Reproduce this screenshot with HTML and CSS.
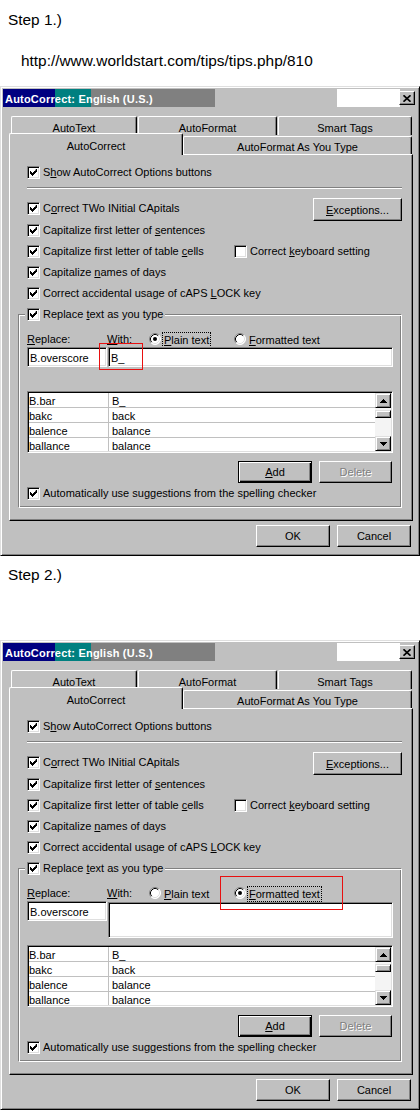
FILE: index.html
```html
<!DOCTYPE html>
<html>
<head>
<meta charset="utf-8">
<link rel="stylesheet" href="styles.css">
</head>
<body>
<p class="step">Step 1.)</p>
<p class="url">http://www.worldstart.com/tips/tips.php/810</p>

<div class="dialog d1">
  <div class="titlebar">
    <span class="title">AutoCorrect: English (U.S.)</span>
    <span class="close"><svg width="8" height="7" viewBox="0 0 8 7"><path d="M0.5 0.3 L7.5 6.7 M7.5 0.3 L0.5 6.7" stroke="#000" stroke-width="1.7" fill="none"/></svg></span>
  </div>
  <div class="tabrow back">
    <div class="tab t1">AutoText</div>
    <div class="tab t2">AutoFormat</div>
    <div class="tab t3">Smart Tags</div>
  </div>
  <div class="tabrow front">
    <div class="tab sel">AutoCorrect</div>
    <div class="tab t5">AutoFormat As You Type</div>
  </div>
  <div class="panel">
    <div class="cb row-show"><span class="chk"><svg width="7" height="7" viewBox="0 0 7 7"><path d="M6 0h1v3h-1v1h-1v1h-1v1h-1v1h-1v-1h-1v-1h-1v-3h1v1h1v1h1v-1h1v-1h1z"/></svg></span><span>S<u>h</u>ow AutoCorrect Options buttons</span></div>
    <div class="sep"></div>
    <div class="cb r1"><span class="chk"><svg width="7" height="7" viewBox="0 0 7 7"><path d="M6 0h1v3h-1v1h-1v1h-1v1h-1v1h-1v-1h-1v-1h-1v-3h1v1h1v1h1v-1h1v-1h1z"/></svg></span><span>C<u>o</u>rrect TWo INitial CApitals</span><span class="btn exc"><u>E</u>xceptions...</span></div>
    <div class="cb r2"><span class="chk"><svg width="7" height="7" viewBox="0 0 7 7"><path d="M6 0h1v3h-1v1h-1v1h-1v1h-1v1h-1v-1h-1v-1h-1v-3h1v1h1v1h1v-1h1v-1h1z"/></svg></span><span>Capitalize first letter of <u>s</u>entences</span></div>
    <div class="cb r3"><span class="cbcol"><span class="chk"><svg width="7" height="7" viewBox="0 0 7 7"><path d="M6 0h1v3h-1v1h-1v1h-1v1h-1v1h-1v-1h-1v-1h-1v-3h1v1h1v1h1v-1h1v-1h1z"/></svg></span><span>Capitalize first letter of table <u>c</u>ells</span></span><span class="chk"></span><span>Correct <u>k</u>eyboard setting</span></div>
    <div class="cb r4"><span class="chk"><svg width="7" height="7" viewBox="0 0 7 7"><path d="M6 0h1v3h-1v1h-1v1h-1v1h-1v1h-1v-1h-1v-1h-1v-3h1v1h1v1h1v-1h1v-1h1z"/></svg></span><span>Capitalize <u>n</u>ames of days</span></div>
    <div class="cb r5"><span class="chk"><svg width="7" height="7" viewBox="0 0 7 7"><path d="M6 0h1v3h-1v1h-1v1h-1v1h-1v1h-1v-1h-1v-1h-1v-3h1v1h1v1h1v-1h1v-1h1z"/></svg></span><span>Correct accidental usage of cAPS <u>L</u>OCK key</span></div>
    <div class="group">
      <div class="cb legend"><span class="chk"><svg width="7" height="7" viewBox="0 0 7 7"><path d="M6 0h1v3h-1v1h-1v1h-1v1h-1v1h-1v-1h-1v-1h-1v-3h1v1h1v1h1v-1h1v-1h1z"/></svg></span><span>Replace <u>t</u>ext as you type</span></div>
      <div class="labels">
        <span class="lbl-replace"><u>R</u>eplace:</span>
        <span class="lbl-with"><u>W</u>ith:</span>
        <span class="opt opt-plain"><svg class="radio" width="12" height="12" viewBox="0 0 12 12"><circle cx="6" cy="6" r="5.5" fill="#fff"/><path d="M2.11 9.89 A5.5 5.5 0 0 1 9.89 2.11" stroke="#808080" fill="none"/><path d="M2.82 9.18 A4.5 4.5 0 0 1 9.18 2.82" stroke="#000" fill="none"/><path d="M9.89 2.11 A5.5 5.5 0 0 1 2.11 9.89" stroke="#fff" fill="none"/><path d="M9.18 2.82 A4.5 4.5 0 0 1 2.82 9.18" stroke="#dfdfdf" fill="none"/><circle cx="6" cy="6" r="2" fill="#000"/></svg><span class="focus"><u>P</u>lain text</span></span>
        <span class="opt"><svg class="radio" width="12" height="12" viewBox="0 0 12 12"><circle cx="6" cy="6" r="5.5" fill="#fff"/><path d="M2.11 9.89 A5.5 5.5 0 0 1 9.89 2.11" stroke="#808080" fill="none"/><path d="M2.82 9.18 A4.5 4.5 0 0 1 9.18 2.82" stroke="#000" fill="none"/><path d="M9.89 2.11 A5.5 5.5 0 0 1 2.11 9.89" stroke="#fff" fill="none"/><path d="M9.18 2.82 A4.5 4.5 0 0 1 2.82 9.18" stroke="#dfdfdf" fill="none"/></svg><span class="nofocus"><u>F</u>ormatted text</span></span>
      </div>
      <div class="inputs">
        <span class="input in-replace">B.overscore</span>
        <span class="input in-with">B_</span>
      </div>
      <div class="list">
        <div class="rows">
          <div class="lrow"><span class="c1">B.bar</span><span class="c2">B_</span></div>
          <div class="lrow"><span class="c1">bakc</span><span class="c2">back</span></div>
          <div class="lrow"><span class="c1">balence</span><span class="c2">balance</span></div>
          <div class="lrow"><span class="c1">ballance</span><span class="c2">balance</span></div>
        </div>
        <div class="scroll">
          <span class="sbtn"><svg width="7" height="4" viewBox="0 0 7 4"><path d="M3 0h1v1h1v1h1v1h1v1H0V3h1V2h1V1h1z"/></svg></span>
          <span class="thumb"></span>
          <span class="sbtn down"><svg width="7" height="4" viewBox="0 0 7 4"><path d="M0 0h7v1h-1v1h-1v1h-1v1h-1v-1h-1v-1h-1v-1h-1z"/></svg></span>
        </div>
      </div>
      <div class="btnrow">
        <span class="btn def add"><u>A</u>dd</span>
        <span class="btn del">Delete</span>
      </div>
      <div class="cb auto"><span class="chk"><svg width="7" height="7" viewBox="0 0 7 7"><path d="M6 0h1v3h-1v1h-1v1h-1v1h-1v1h-1v-1h-1v-1h-1v-3h1v1h1v1h1v-1h1v-1h1z"/></svg></span><span>Automatically use sug<u>g</u>estions from the spelling checker</span></div>
    </div>
  </div>
  <div class="footer">
    <span class="btn fbtn">OK</span>
    <span class="btn fbtn">Cancel</span>
  </div>
  <div class="redbox rb1"></div>
</div>

<p class="step step2">Step 2.)</p>

<div class="dialog d2">
  <div class="titlebar">
    <span class="title">AutoCorrect: English (U.S.)</span>
    <span class="close"><svg width="8" height="7" viewBox="0 0 8 7"><path d="M0.5 0.3 L7.5 6.7 M7.5 0.3 L0.5 6.7" stroke="#000" stroke-width="1.7" fill="none"/></svg></span>
  </div>
  <div class="tabrow back">
    <div class="tab t1">AutoText</div>
    <div class="tab t2">AutoFormat</div>
    <div class="tab t3">Smart Tags</div>
  </div>
  <div class="tabrow front">
    <div class="tab sel">AutoCorrect</div>
    <div class="tab t5">AutoFormat As You Type</div>
  </div>
  <div class="panel">
    <div class="cb row-show"><span class="chk"><svg width="7" height="7" viewBox="0 0 7 7"><path d="M6 0h1v3h-1v1h-1v1h-1v1h-1v1h-1v-1h-1v-1h-1v-3h1v1h1v1h1v-1h1v-1h1z"/></svg></span><span>S<u>h</u>ow AutoCorrect Options buttons</span></div>
    <div class="sep"></div>
    <div class="cb r1"><span class="chk"><svg width="7" height="7" viewBox="0 0 7 7"><path d="M6 0h1v3h-1v1h-1v1h-1v1h-1v1h-1v-1h-1v-1h-1v-3h1v1h1v1h1v-1h1v-1h1z"/></svg></span><span>C<u>o</u>rrect TWo INitial CApitals</span><span class="btn exc"><u>E</u>xceptions...</span></div>
    <div class="cb r2"><span class="chk"><svg width="7" height="7" viewBox="0 0 7 7"><path d="M6 0h1v3h-1v1h-1v1h-1v1h-1v1h-1v-1h-1v-1h-1v-3h1v1h1v1h1v-1h1v-1h1z"/></svg></span><span>Capitalize first letter of <u>s</u>entences</span></div>
    <div class="cb r3"><span class="cbcol"><span class="chk"><svg width="7" height="7" viewBox="0 0 7 7"><path d="M6 0h1v3h-1v1h-1v1h-1v1h-1v1h-1v-1h-1v-1h-1v-3h1v1h1v1h1v-1h1v-1h1z"/></svg></span><span>Capitalize first letter of table <u>c</u>ells</span></span><span class="chk"></span><span>Correct <u>k</u>eyboard setting</span></div>
    <div class="cb r4"><span class="chk"><svg width="7" height="7" viewBox="0 0 7 7"><path d="M6 0h1v3h-1v1h-1v1h-1v1h-1v1h-1v-1h-1v-1h-1v-3h1v1h1v1h1v-1h1v-1h1z"/></svg></span><span>Capitalize <u>n</u>ames of days</span></div>
    <div class="cb r5"><span class="chk"><svg width="7" height="7" viewBox="0 0 7 7"><path d="M6 0h1v3h-1v1h-1v1h-1v1h-1v1h-1v-1h-1v-1h-1v-3h1v1h1v1h1v-1h1v-1h1z"/></svg></span><span>Correct accidental usage of cAPS <u>L</u>OCK key</span></div>
    <div class="group">
      <div class="cb legend"><span class="chk"><svg width="7" height="7" viewBox="0 0 7 7"><path d="M6 0h1v3h-1v1h-1v1h-1v1h-1v1h-1v-1h-1v-1h-1v-3h1v1h1v1h1v-1h1v-1h1z"/></svg></span><span>Replace <u>t</u>ext as you type</span></div>
      <div class="labels">
        <span class="lbl-replace"><u>R</u>eplace:</span>
        <span class="lbl-with"><u>W</u>ith:</span>
        <span class="opt opt-plain"><svg class="radio" width="12" height="12" viewBox="0 0 12 12"><circle cx="6" cy="6" r="5.5" fill="#fff"/><path d="M2.11 9.89 A5.5 5.5 0 0 1 9.89 2.11" stroke="#808080" fill="none"/><path d="M2.82 9.18 A4.5 4.5 0 0 1 9.18 2.82" stroke="#000" fill="none"/><path d="M9.89 2.11 A5.5 5.5 0 0 1 2.11 9.89" stroke="#fff" fill="none"/><path d="M9.18 2.82 A4.5 4.5 0 0 1 2.82 9.18" stroke="#dfdfdf" fill="none"/></svg><span class="nofocus"><u>P</u>lain text</span></span>
        <span class="opt"><svg class="radio" width="12" height="12" viewBox="0 0 12 12"><circle cx="6" cy="6" r="5.5" fill="#fff"/><path d="M2.11 9.89 A5.5 5.5 0 0 1 9.89 2.11" stroke="#808080" fill="none"/><path d="M2.82 9.18 A4.5 4.5 0 0 1 9.18 2.82" stroke="#000" fill="none"/><path d="M9.89 2.11 A5.5 5.5 0 0 1 2.11 9.89" stroke="#fff" fill="none"/><path d="M9.18 2.82 A4.5 4.5 0 0 1 2.82 9.18" stroke="#dfdfdf" fill="none"/><circle cx="6" cy="6" r="2" fill="#000"/></svg><span class="focus"><u>F</u>ormatted text</span></span>
      </div>
      <div class="inputs">
        <span class="input in-replace">B.overscore</span>
        <span class="input in-with tall"></span>
      </div>
      <div class="list">
        <div class="rows">
          <div class="lrow"><span class="c1">B.bar</span><span class="c2">B_</span></div>
          <div class="lrow"><span class="c1">bakc</span><span class="c2">back</span></div>
          <div class="lrow"><span class="c1">balence</span><span class="c2">balance</span></div>
          <div class="lrow"><span class="c1">ballance</span><span class="c2">balance</span></div>
        </div>
        <div class="scroll">
          <span class="sbtn"><svg width="7" height="4" viewBox="0 0 7 4"><path d="M3 0h1v1h1v1h1v1h1v1H0V3h1V2h1V1h1z"/></svg></span>
          <span class="thumb"></span>
          <span class="sbtn down"><svg width="7" height="4" viewBox="0 0 7 4"><path d="M0 0h7v1h-1v1h-1v1h-1v1h-1v-1h-1v-1h-1v-1h-1z"/></svg></span>
        </div>
      </div>
      <div class="btnrow">
        <span class="btn def add"><u>A</u>dd</span>
        <span class="btn del">Delete</span>
      </div>
      <div class="cb auto"><span class="chk"><svg width="7" height="7" viewBox="0 0 7 7"><path d="M6 0h1v3h-1v1h-1v1h-1v1h-1v1h-1v-1h-1v-1h-1v-3h1v1h1v1h1v-1h1v-1h1z"/></svg></span><span>Automatically use sug<u>g</u>estions from the spelling checker</span></div>
    </div>
  </div>
  <div class="footer">
    <span class="btn fbtn">OK</span>
    <span class="btn fbtn">Cancel</span>
  </div>
  <div class="redbox rb2"></div>
</div>
</body>
</html>
```
FILE: styles.css
```css
* { box-sizing: border-box; }
body {
  margin: 0;
  width: 420px;
  background: #fff;
  color: #000;
  font-family: "Liberation Sans", Arial, sans-serif;
}
.step {
  margin: 0;
  padding: 11px 0 0 8px;
  font-size: 15.4px;
  line-height: 18px;
}
.url {
  margin: 23px 0 0 21px;
  font-size: 15.4px;
  line-height: 18px;
}
.step2 { margin-top: 10px; padding-top: 0; }

.dialog {
  position: relative;
  width: 420px;
  height: 470px;
  margin-top: 16px;
  background: #c0c0c0;
  border: 1px solid;
  border-color: #dfdfdf #000 #000 #dfdfdf;
  box-shadow: inset 1px 1px #fff, inset -1px -1px #808080;
  padding: 2px 2px 0 2px;
  font-size: 11px;
  line-height: 13px;
}
.d2 { margin-top: 56px; }

.titlebar {
  height: 18px;
  display: flex;
  align-items: center;
  padding: 0 2px 0 2px;
  background: linear-gradient(to right, #000080 0 52px, #008080 52px 88px, #808080 88px 212px, #c0c0c0 212px 334px, #fff 334px 397px, #c0c0c0 397px);
}
.title {
  color: #fff;
  font-weight: bold;
  font-size: 11px;
  letter-spacing: 0.2px;
  padding-top: 2px;
}
.close {
  margin-left: auto;
  width: 16px;
  height: 14px;
  background: #c0c0c0;
  border: 1px solid;
  border-color: #fff #000 #000 #fff;
  box-shadow: inset -1px -1px #808080;
  display: flex;
  align-items: center;
  justify-content: center;
}

.tabrow { display: flex; }
.back { margin: 9px 0 0 8px; }
.front { margin: -2px 0 0 6px; align-items: flex-end; }
.tab {
  height: 19px;
  display: flex;
  align-items: center;
  justify-content: center;
  background: #c0c0c0;
  border-top: 1px solid #fff;
  border-left: 1px solid #fff;
  border-right: 1px solid #000;
  box-shadow: inset -1px 0 #808080;
  border-radius: 2px 2px 0 0;
  padding-top: 4px;
}
.t1 { width: 126px; }
.t2 { width: 139px; margin-left: 1px; }
.t3 { width: 134px; margin-left: 1px; }
.sel {
  width: 174px;
  height: 22px;
  margin-bottom: -1px;
  position: relative;
  z-index: 1;
  padding-top: 3px;
}
.t5 { width: 229px; height: 18px; padding-top: 3px; }

.panel {
  margin-left: 6px;
  width: 404px;
  height: 367px;
  border: 1px solid;
  border-color: #fff #000 #000 #fff;
  box-shadow: inset -1px -1px #808080;
  padding: 6px 0 0 17px;
  display: flex;
  flex-direction: column;
}

.cb { display: flex; align-items: center; gap: 3px; white-space: nowrap; padding-top: 2px; }
.chk {
  flex: none;
  width: 13px;
  height: 13px;
  background: #fff;
  border: 1px solid;
  border-color: #808080 #fff #fff #808080;
  box-shadow: inset 1px 1px #000, inset -1px -1px #dfdfdf;
  display: flex;
  align-items: center;
  justify-content: center;
}
.chk svg { display: block; }
.row-show { height: 20px; }
.sep {
  width: 375px;
  height: 2px;
  margin-top: 6px;
  border-top: 1px solid #808080;
  border-bottom: 1px solid #fff;
}
.r1 { height: 22px; margin-top: 7px; padding-right: 10px; }
.r2 { height: 22px; }
.r3 { height: 21px; }
.r4 { height: 21px; }
.r5 { height: 21px; }
.cbcol { display: flex; align-items: center; gap: 3px; width: 204px; }

.btn {
  display: flex;
  align-items: center;
  justify-content: center;
  height: 22px;
  padding-top: 1px;
  background: #c0c0c0;
  border: 1px solid;
  border-color: #fff #000 #000 #fff;
  box-shadow: inset -1px -1px #808080;
}
.exc {
  margin-left: auto;
  width: 89px;
  height: 23px;
  align-self: flex-start;
}
.def {
  border-color: #000;
  box-shadow: inset 1px 1px #fff, inset -1px -1px #000, inset -2px -2px #808080;
}
.del { color: #808080; text-shadow: 1px 1px #fff; }

.group {
  margin: 11px 0 0 -9px;
  width: 384px;
  height: 194px;
  border: 1px solid;
  border-color: #808080 #fff #fff #808080;
  box-shadow: inset 1px 1px #fff, inset -1px -1px #808080;
  padding: 0 8px;
  display: flex;
  flex-direction: column;
}
.legend {
  align-self: flex-start;
  height: 16px;
  margin: -9px 0 0 -2px;
  padding: 1px 2px 0 2px;
  background: #c0c0c0;
}
.labels {
  display: flex;
  align-items: center;
  height: 17px;
  margin-top: 8px;
  padding-top: 2px;
  white-space: nowrap;
}
.lbl-replace { width: 80px; }
.lbl-with { width: 42px; }
.opt { display: flex; align-items: center; gap: 1px; }
.opt-plain { width: 85px; }
.radio { display: block; flex: none; margin-top: -1px; }
.focus, .nofocus { padding: 1px 1px 0 1px; border: 1px dotted transparent; }
.focus { border-color: #000; }

.inputs {
  height: 44px;
  display: flex;
  align-items: flex-start;
}
.input {
  height: 20px;
  background: #fff;
  border: 1px solid;
  border-color: #808080 #fff #fff #808080;
  box-shadow: inset 1px 1px #000, inset -1px -1px #dfdfdf;
  padding: 2px 0 0 2px;
  display: flex;
  align-items: center;
}
.in-replace { width: 80px; }
.in-with { width: 285px; margin-left: 1px; }
.tall { height: 36px; margin-top: 1px; }

.list {
  width: 366px;
  height: 62px;
  background: #fff;
  border: 1px solid;
  border-color: #808080 #fff #fff #808080;
  box-shadow: inset 1px 1px #000, inset -1px -1px #dfdfdf;
  padding: 1px;
  display: flex;
}
.rows { flex: 1; overflow: hidden; }
.lrow {
  height: 15px;
  display: flex;
  border-bottom: 1px solid #c0c0c0;
}
.c1 {
  width: 80px;
  border-right: 1px solid #c0c0c0;
  display: flex;
  align-items: center;
  padding-top: 2px;
}
.c2 { display: flex; align-items: center; padding: 2px 0 0 3px; }
.scroll {
  width: 16px;
  display: flex;
  flex-direction: column;
  background: #f4f4f4;
}
.sbtn {
  height: 15px;
  background: #c0c0c0;
  border: 1px solid;
  border-color: #dfdfdf #000 #000 #dfdfdf;
  box-shadow: inset 1px 1px #fff, inset -1px -1px #808080;
  display: flex;
  align-items: center;
  justify-content: center;
}
.sbtn svg { display: block; }
.down { margin-top: auto; }
.thumb {
  height: 8px;
  margin-top: 2px;
  background: #c0c0c0;
  border: 1px solid;
  border-color: #dfdfdf #000 #000 #dfdfdf;
  box-shadow: inset 1px 1px #fff, inset -1px -1px #808080;
}

.btnrow {
  display: flex;
  justify-content: flex-end;
  gap: 7px;
  margin-top: 8px;
  padding-right: 1px;
}
.add { width: 74px; }
.del { width: 73px; }
.auto { height: 17px; margin-top: 1px; }

.footer {
  display: flex;
  justify-content: flex-end;
  gap: 7px;
  margin-top: 4px;
  padding-right: 6px;
}
.fbtn { width: 74px; }

.redbox {
  position: absolute;
  border: 1px solid #e81010;
}
.rb1 { left: 98px; top: 256px; width: 44px; height: 27px; }
.rb2 { left: 219px; top: 235px; width: 123px; height: 34px; }
```
